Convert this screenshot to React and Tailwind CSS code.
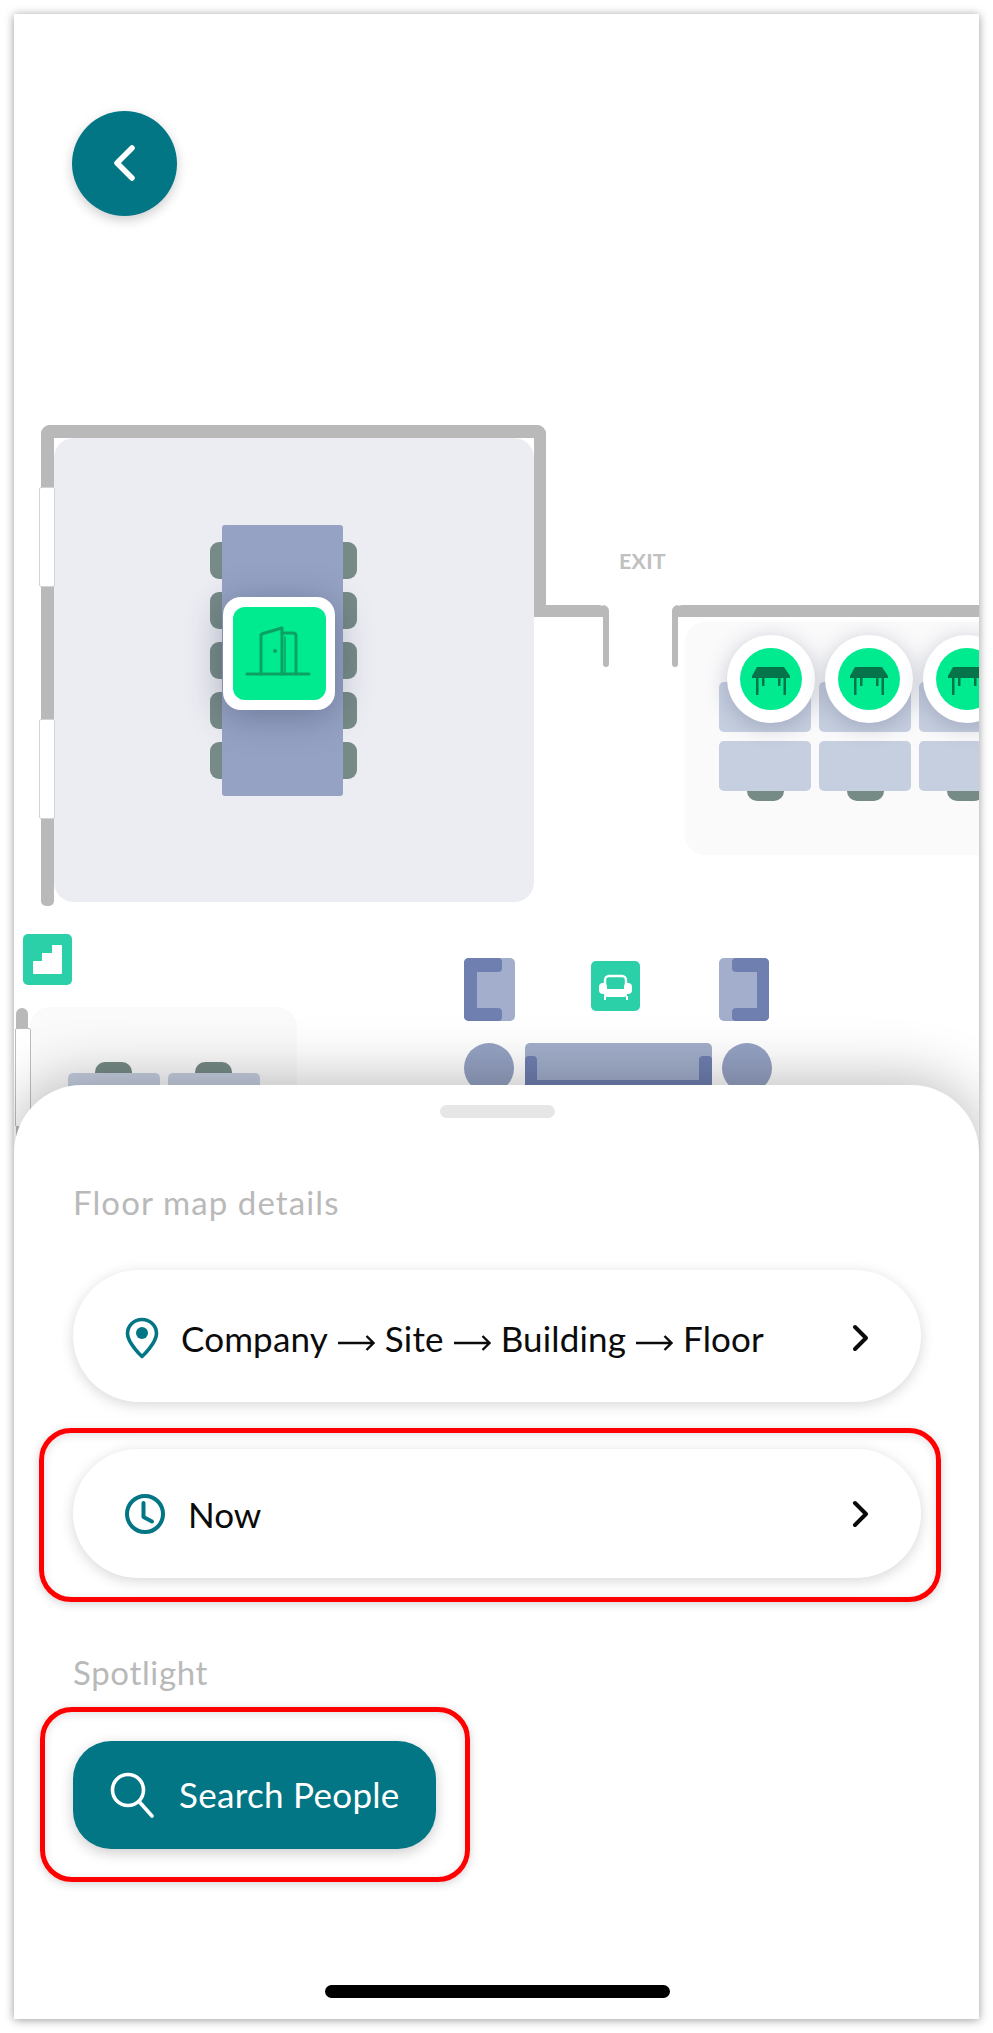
import React from "react";

const Chevron = () => (
  <svg width="20" height="28" viewBox="0 0 20 28" fill="none" stroke="#0b0b0b" strokeWidth="4" strokeLinecap="round" strokeLinejoin="round">
    <path d="M4 3 L15 14 L4 25" />
  </svg>
);

const Arrow = () => (
  <svg className="mx-[10px] inline-block align-middle" width="37" height="18" viewBox="0 0 37 18" fill="none" stroke="#0b0b0b" strokeWidth="2.4">
    <path d="M0 9 H35.5 M28.5 2 L35.5 9 L28.5 16" />
  </svg>
);

const TableIcon = () => (
  <svg width="62" height="62" viewBox="0 0 62 62" fill="#05744a">
    <path d="M17 19 H44 L50 28 V30 H12 V28 Z" />
    <rect x="16" y="30" width="2.5" height="17" />
    <rect x="43.5" y="30" width="2.5" height="17" />
    <rect x="22" y="30" width="2.5" height="8" />
    <rect x="38" y="30" width="2.5" height="8" />
  </svg>
);

const DeskMarker = () => (
  <div className="flex h-[88px] w-[88px] shrink-0 items-center justify-center rounded-full bg-white shadow-[0_4px_22px_rgba(60,70,100,0.28)]">
    <div className="h-[62px] w-[62px] rounded-full bg-[#00ea90]">
      <TableIcon />
    </div>
  </div>
);

const Wall = ({ className }) => <div className={`absolute bg-[#b9b9b9] ${className}`} />;
const SideChair = () => <div className="h-[37px] w-[30px] rounded-[9px] bg-[#768a86]" />;
const DeskChair = ({ className }) => <div className={`h-[17px] w-[37px] shrink-0 bg-[#768a86] ${className}`} />;
const Desk = () => <div className="h-[50px] w-[92px] rounded-[5px] bg-[#c6cfe0]" />;

function FloorMap() {
  return (
    <div className="relative h-[1071px] w-full">
      {/* back button */}
      <button className="absolute left-[58px] top-[97px] z-10 flex h-[105px] w-[105px] items-center justify-center rounded-full bg-[#027684] shadow-[0_4px_12px_rgba(0,0,0,0.2)]">
        <svg width="30" height="42" viewBox="0 0 30 42" fill="none" stroke="#fff" strokeWidth="5.5" strokeLinecap="round" strokeLinejoin="round">
          <path d="M22 5 L7 20 L22 35" />
        </svg>
      </button>

      {/* meeting room */}
      <div className="absolute left-[40px] top-[424px] h-[464px] w-[480px] rounded-[20px] bg-[#ecedf3]" />
      <Wall className="left-[27px] top-[411px] h-[13px] w-[505px] rounded-t-[9px]" />
      <Wall className="left-[27px] top-[411px] h-[481px] w-[13px] rounded-tl-[9px] rounded-b-[5px]" />
      <Wall className="left-[520px] top-[411px] h-[192px] w-[12px] rounded-tr-[9px]" />
      <Wall className="left-[520px] top-[591px] h-[12px] w-[75px] rounded-tr-[10px]" />
      <Wall className="left-[589px] top-[591px] h-[62px] w-[6px] rounded-b-[3px] rounded-tr-[6px]" />
      <div className="absolute left-[25px] top-[473px] h-[100px] w-[16px] rounded-[2px] border border-[#d4d4d4] bg-white" />
      <div className="absolute left-[25px] top-[705px] h-[100px] w-[16px] rounded-[2px] border border-[#d4d4d4] bg-white" />

      <div className="absolute left-[196px] top-[528px] flex flex-col gap-[13px]">
        <SideChair /><SideChair /><SideChair /><SideChair /><SideChair />
      </div>
      <div className="absolute left-[313px] top-[528px] flex flex-col gap-[13px]">
        <SideChair /><SideChair /><SideChair /><SideChair /><SideChair />
      </div>
      <div className="absolute left-[208px] top-[511px] h-[271px] w-[121px] rounded-[3px] bg-[#95a2c3]" />
      <div className="absolute left-[209px] top-[583px] flex h-[113px] w-[112px] items-center justify-center rounded-[18px] bg-white shadow-[0_6px_36px_rgba(50,60,90,0.4)]">
        <div className="h-[93px] w-[93px] rounded-[12px] bg-[#00ea90]">
          <svg width="93" height="93" viewBox="0 0 93 93" fill="none" stroke="#0ba163" strokeWidth="3" strokeLinecap="round" strokeLinejoin="round">
            <path d="M14 67 H76" />
            <path d="M28 67 V29 Q28 27 30 26.5 L49 21 V67" />
            <path d="M49 26 H60 Q63 26 63 29 V67" />
            <path d="M52 30 V67" strokeWidth="1.5" />
            <circle cx="42" cy="44" r="2" fill="#0ba163" stroke="none" />
          </svg>
        </div>
      </div>

      {/* exit */}
      <div className="absolute left-[605px] top-[535px] font-['Lato',sans-serif] text-[21.5px] font-bold leading-[24px] tracking-[0.2px] text-[#c0c0c0]">EXIT</div>

      {/* open desks */}
      <div className="absolute left-[671px] top-[608px] h-[233px] w-[330px] rounded-[20px] bg-[#fafafb]" />
      <Wall className="left-[658px] top-[591px] h-[62px] w-[6px] rounded-b-[3px] rounded-tl-[6px]" />
      <Wall className="left-[658px] top-[591px] h-[12px] w-[307px] rounded-tl-[10px]" />
      <div className="absolute left-[733px] top-[770px] flex gap-[63px]">
        <DeskChair className="rounded-b-[10px]" />
        <DeskChair className="rounded-b-[10px]" />
        <DeskChair className="rounded-b-[10px]" />
      </div>
      <div className="absolute left-[705px] top-[668px] grid grid-cols-[92px_92px_92px] gap-x-[8px] gap-y-[9px]">
        <Desk /><Desk /><Desk /><Desk /><Desk /><Desk />
      </div>
      <div className="absolute left-[713px] top-[621px] flex gap-[10px]">
        <DeskMarker /><DeskMarker /><DeskMarker />
      </div>

      {/* stairs */}
      <div className="absolute left-[9px] top-[920px] h-[51px] w-[49px] rounded-[5px] bg-[#2bd0a8]">
        <svg width="49" height="51" viewBox="0 0 49 51" fill="#fff">
          <path d="M11 40 Q10 40 10 39 V28 Q10 27 11 27 H19 V19 H29 V11 H38 Q39 11 39 12 V39 Q39 40 38 40 Z" />
        </svg>
      </div>

      {/* lower left room */}
      <div className="absolute left-[16px] top-[993px] h-[120px] w-[267px] rounded-[20px] bg-[#fafafb]" />
      <Wall className="left-[2px] top-[994px] h-[30px] w-[12px] rounded-t-full" />
      <Wall className="left-[2px] top-[1105px] h-[40px] w-[12px]" />
      <div className="absolute left-[1px] top-[1014px] h-[99px] w-[16px] rounded-[2px] border border-[#bdbdbd] bg-white" />
      <div className="absolute left-[81px] top-[1048px] flex gap-[63px]">
        <DeskChair className="rounded-t-[10px]" />
        <DeskChair className="rounded-t-[10px]" />
      </div>
      <div className="absolute left-[54px] top-[1059px] flex gap-[8px]">
        <Desk /><Desk />
      </div>

      {/* lounge */}
      <div className="absolute left-[450px] top-[944px] h-[63px] w-[51px] overflow-hidden rounded-[5px] bg-[#a2aecb]">
        <div className="absolute left-0 top-0 h-[14px] w-[38px] rounded-r-[4px] bg-[#6f7fb0]" />
        <div className="absolute bottom-0 left-0 h-[13px] w-[38px] rounded-r-[4px] bg-[#6f7fb0]" />
        <div className="absolute left-0 top-0 h-full w-[13px] bg-[#6f7fb0]" />
      </div>
      <div className="absolute left-[577px] top-[947px] h-[50px] w-[49px] rounded-[5px] bg-[#2bd0a8]">
        <svg width="49" height="50" viewBox="0 0 49 50" fill="#fff">
          <rect x="14" y="15" width="21" height="17" rx="4" fill="none" stroke="#fff" strokeWidth="2.4" />
          <rect x="8" y="22" width="8" height="11" rx="4" />
          <rect x="33" y="22" width="8" height="11" rx="4" />
          <rect x="13" y="28" width="23" height="8" rx="3" />
          <rect x="13" y="35" width="2" height="4" />
          <rect x="35" y="35" width="2" height="4" />
        </svg>
      </div>
      <div className="absolute left-[705px] top-[944px] h-[63px] w-[50px] overflow-hidden rounded-[5px] bg-[#a2aecb]">
        <div className="absolute right-0 top-0 h-[14px] w-[37px] rounded-l-[4px] bg-[#6f7fb0]" />
        <div className="absolute bottom-0 right-0 h-[13px] w-[37px] rounded-l-[4px] bg-[#6f7fb0]" />
        <div className="absolute right-0 top-0 h-full w-[12px] bg-[#6f7fb0]" />
      </div>
      <div className="absolute left-[450px] top-[1029px] flex w-[308px] items-start justify-between">
        <div className="h-[50px] w-[50px] rounded-full bg-[#95a2c3]" />
        <div className="relative h-[60px] w-[187px] overflow-hidden rounded-t-[5px] bg-[#a2aecb]">
          <div className="absolute bottom-0 left-0 top-[13px] w-[12px] rounded-t-[4px] bg-[#6f7fb0]" />
          <div className="absolute bottom-0 right-0 top-[13px] w-[13px] rounded-t-[4px] bg-[#6f7fb0]" />
          <div className="absolute left-0 right-0 top-[37px] h-[23px] bg-[#6f7fb0]" />
          <div className="absolute left-[12px] right-[13px] top-0 h-[37px] rounded-b-[4px] bg-[#a2aecb]" />
        </div>
        <div className="h-[50px] w-[50px] rounded-full bg-[#95a2c3]" />
      </div>
    </div>
  );
}

const Pill = ({ className, children }) => (
  <div className={`flex w-full items-center rounded-full bg-white shadow-[0_3px_14px_rgba(0,0,0,0.16)] ${className}`}>
    {children}
    <div className="ml-auto mr-[50px] flex items-center">
      <Chevron />
    </div>
  </div>
);

export default function App() {
  return (
    <div className="h-[2033px] w-full overflow-hidden bg-white px-[14px] pt-[14px] font-['Lato',sans-serif]">
      <div className="relative h-[2005px] overflow-hidden bg-white shadow-[0_1px_9px_rgba(0,0,0,0.4)]">
        <FloorMap />

        <div className="relative z-20 flex h-[934px] flex-col rounded-t-[68px] bg-white pl-[59px] pr-[58px] shadow-[0_-4px_60px_rgba(0,0,0,0.28)]">
          <div className="mx-auto mt-[20px] h-[13px] w-[115px] shrink-0 rounded-full bg-[#e6e6e6]" />

          <div className="mt-[64px] h-[40px] text-[33px] leading-[40px] tracking-[1.1px] text-[#b9b9b9]">Floor map details</div>

          <Pill className="mt-[48px] h-[132px] pt-[4px]">
            <svg className="ml-[52px]" width="34" height="42" viewBox="0 0 34 42" fill="none" stroke="#027684" strokeWidth="3.6" strokeLinejoin="round">
              <path d="M17 2.5 C8.5 2.5 2.5 9 2.5 16.5 C2.5 26 17 39.5 17 39.5 C17 39.5 31.5 26 31.5 16.5 C31.5 9 25.5 2.5 17 2.5 Z" />
              <circle cx="17" cy="16" r="6" fill="#027684" stroke="none" />
            </svg>
            <span className="ml-[22px] whitespace-nowrap text-[35px] leading-[40px] tracking-[0.15px] text-[#0b0b0b]">
              Company<Arrow />Site<Arrow />Building<Arrow />Floor
            </span>
          </Pill>

          <Pill className="mt-[47px] h-[129px]">
            <svg className="ml-[52px]" width="40" height="40" viewBox="0 0 40 40" fill="none" stroke="#027684" strokeWidth="4" strokeLinecap="round" strokeLinejoin="round">
              <circle cx="20" cy="20" r="18" />
              <path d="M18.5 9 V23 L27 27.5" />
            </svg>
            <span className="ml-[23px] text-[35px] leading-[40px] text-[#0b0b0b]">Now</span>
          </Pill>

          <div className="mt-[74px] h-[40px] text-[33px] leading-[40px] tracking-[0.65px] text-[#b9b9b9]">Spotlight</div>

          <button className="mt-[49px] flex h-[108px] w-[363px] shrink-0 items-center rounded-[38px] bg-[#027684] shadow-[0_4px_14px_rgba(0,0,0,0.2)]">
            <svg className="ml-[37px]" width="44" height="46" viewBox="0 0 44 46" fill="none" stroke="#fff" strokeWidth="3.6" strokeLinecap="round">
              <circle cx="18" cy="18" r="15.5" />
              <path d="M29.5 30 L42 44" />
            </svg>
            <span className="mb-[2px] ml-[25px] whitespace-nowrap text-[35px] leading-[40px] tracking-[0.3px] text-white">Search People</span>
          </button>

          <div className="mx-auto mt-[136px] h-[13px] w-[345px] shrink-0 rounded-full bg-black" />
        </div>

        {/* annotations */}
        <div className="absolute left-[25px] top-[1414px] z-30 h-[174px] w-[902px] rounded-[32px] border-[5px] border-[#ff0000] shadow-[0_2px_10px_rgba(0,0,0,0.18),inset_0_2px_10px_rgba(0,0,0,0.12)]" />
        <div className="absolute left-[26px] top-[1693px] z-30 h-[175px] w-[430px] rounded-[32px] border-[5px] border-[#ff0000] shadow-[0_2px_10px_rgba(0,0,0,0.18),inset_0_2px_10px_rgba(0,0,0,0.12)]" />
      </div>
    </div>
  );
}
